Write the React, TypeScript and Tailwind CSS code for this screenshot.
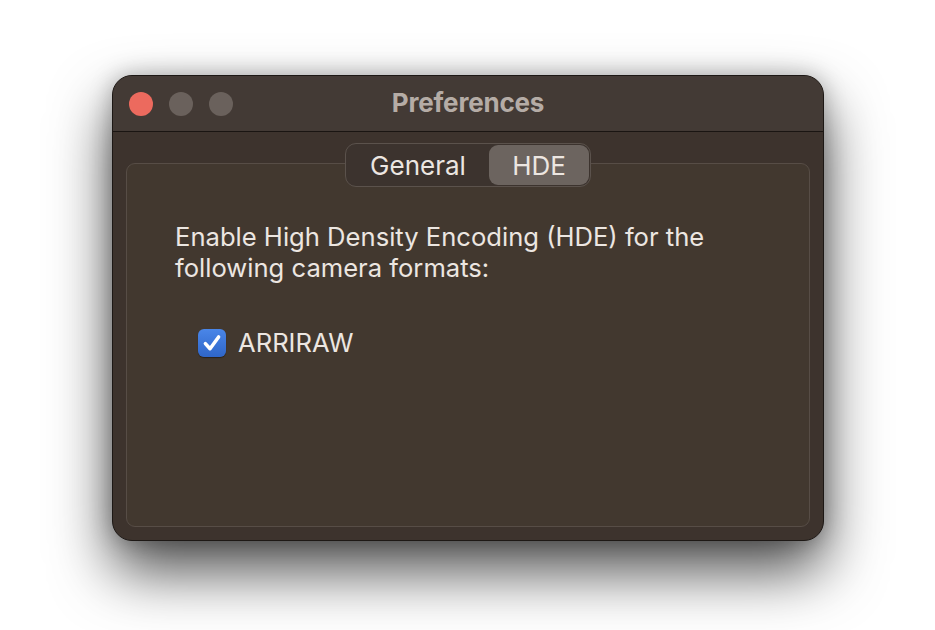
import React from "react";

const font = { fontFamily: "Inter, 'Noto Sans', 'Liberation Sans', sans-serif" };

function TrafficLights() {
  return (
    <div className="flex items-center gap-[16px] pl-[16px]">
      <div className="w-[24px] h-[24px] rounded-full bg-[#ec6a5e]" />
      <div className="w-[24px] h-[24px] rounded-full bg-[#6a615c]" />
      <div className="w-[24px] h-[24px] rounded-full bg-[#6a615c]" />
    </div>
  );
}

function CheckIcon() {
  return (
    <div className="w-[28px] h-[28px] rounded-[6px] bg-gradient-to-b from-[#4a86e8] to-[#2f66c9] flex items-center justify-center shadow-[0_1px_1px_rgba(0,0,0,0.4)]">
      <svg width="22" height="22" viewBox="0 0 20 20" fill="none">
        <path d="M4 10.5 L8.2 15.2 L16 4.5" stroke="white" strokeWidth="3.2" strokeLinecap="round" strokeLinejoin="round" />
      </svg>
    </div>
  );
}

export default function App() {
  return (
    <div className="w-[935px] h-[630px] bg-white pt-[75px] pl-[112px]" style={font}>
      <div className="w-[712px] h-[466px] rounded-[20px] bg-[#3d332d] border border-[#1d1815] shadow-[0_30px_60px_rgba(0,0,0,0.7),0_0_22px_rgba(0,0,0,0.25)] flex flex-col overflow-hidden">
        {/* title bar */}
        <div className="relative h-[56px] shrink-0 bg-[#433a35] border-b border-[#1a1512] flex items-center">
          <TrafficLights />
          <div className="absolute inset-0 flex items-center justify-center pb-[2px] text-[26px] font-bold text-[#b5aca6] tracking-[-0.2px]">
            Preferences
          </div>
        </div>

        {/* body */}
        <div className="flex-1 flex flex-col items-center px-[13px] pt-[11px] pb-[13px]">
          <div className="relative z-10 flex h-[44px] rounded-[11px] border border-[#5b524c] bg-[#3c332e] p-[1px] text-[26px] text-[#ece6e1]">
            <div className="w-[142px] flex items-center justify-center">General</div>
            <div className="w-[100px] flex items-center justify-center rounded-[9px] bg-[#6c645f]">HDE</div>
          </div>
          <div className="w-full flex-1 -mt-[24px] rounded-[9px] border border-[#574d46] bg-[#42382f] pl-[48px] pt-[57px]">
            <p className="text-[25.6px] leading-[31px] text-[#ece6e1] w-[560px]">
              Enable High Density Encoding (HDE) for the following camera formats:
            </p>
            <div className="flex items-center gap-[12px] mt-[41px] pl-[23px]">
              <CheckIcon />
              <span className="text-[25.6px] text-[#ece6e1]">ARRIRAW</span>
            </div>
          </div>
        </div>
      </div>
    </div>
  );
}
